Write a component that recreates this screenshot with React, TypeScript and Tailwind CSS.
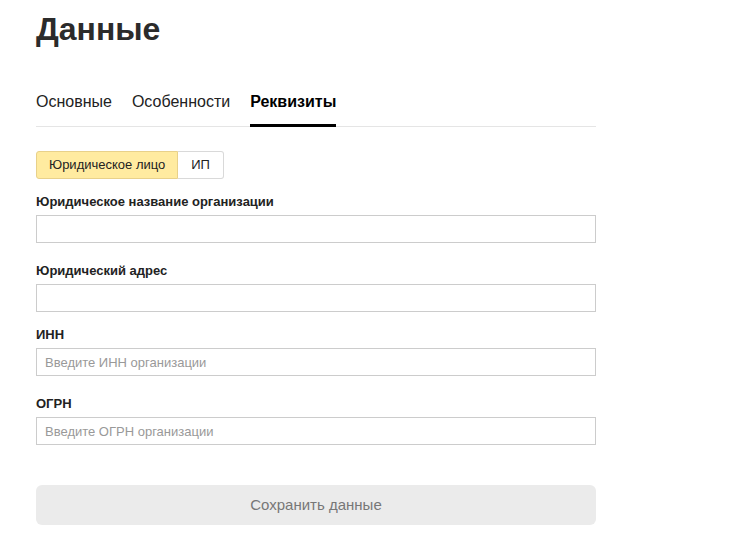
import { useState } from "react";

type Field = {
  label: string;
  placeholder?: string;
  top: string;
};

// top margin per row: the ИНН block sits a bit tighter in the layout
const fields: Field[] = [
  { label: "Юридическое название организации", top: "mt-0" },
  { label: "Юридический адрес", top: "mt-[20px]" },
  { label: "ИНН", placeholder: "Введите ИНН организации", top: "mt-[15px]" },
  { label: "ОГРН", placeholder: "Введите ОГРН организации", top: "mt-[20px]" },
];

const tabs = ["Основные", "Особенности", "Реквизиты"];

const App = () => {
  const [tab, setTab] = useState(2);
  const [kind, setKind] = useState<"org" | "ip">("org");

  return (
    <div className="min-h-screen w-full bg-white text-[#222] font-['Liberation_Sans',Arial,sans-serif]">
      <div className="w-[560px] ml-9 pt-[9px]">
        {/* page title */}
        <h1 className="text-[32px] leading-[40px] font-bold text-[#2b2b2b]">Данные</h1>

        {/* tabs */}
        <div className="mt-[43px] flex gap-5 border-b border-[#e5e5e5]">
          {tabs.map((t, i) => (
            <button
              key={t}
              type="button"
              onClick={() => setTab(i)}
              className={
                "pb-[12px] text-[16px] leading-[20px] border-b-[3px] -mb-px cursor-pointer " +
                (tab === i ? "font-bold text-black border-black" : "text-[#222] border-transparent")
              }
            >
              {t}
            </button>
          ))}
        </div>

        {/* org type switch */}
        <div className="mt-[24px] flex">
          <button
            type="button"
            onClick={() => setKind("org")}
            className={
              "h-[28px] px-[12px] text-[13px] rounded-l-[3px] border " +
              (kind === "org" ? "bg-[#ffeba0] border-[#e8d18a]" : "bg-white border-[#d9d9d9]")
            }
          >
            Юридическое лицо
          </button>
          <button
            type="button"
            onClick={() => setKind("ip")}
            className={
              "h-[28px] px-[13px] text-[13px] rounded-r-[3px] border border-l-0 " +
              (kind === "ip" ? "bg-[#ffeba0] border-[#e8d18a]" : "bg-white border-[#d9d9d9]")
            }
          >
            ИП
          </button>
        </div>

        {/* requisites form */}
        <form className="mt-[15px] flex flex-col">
          {fields.map((f) => (
            <label key={f.label} className={"flex flex-col " + f.top}>
              <span className="text-[13px] leading-[16px] font-bold text-[#222] mb-[5px]">{f.label}</span>
              <input
                type="text"
                placeholder={f.placeholder}
                className="h-[28px] w-full border border-[#cccccc] px-[8px] text-[13px] outline-0 placeholder:text-[#999]"
              />
            </label>
          ))}
        </form>

        <button
          type="button"
          disabled
          className="mt-[40px] h-[40px] w-full rounded-[6px] bg-[#ebebeb] text-[15px] text-[#777]"
        >
          Сохранить данные
        </button>
      </div>
    </div>
  );
};

export default App;
